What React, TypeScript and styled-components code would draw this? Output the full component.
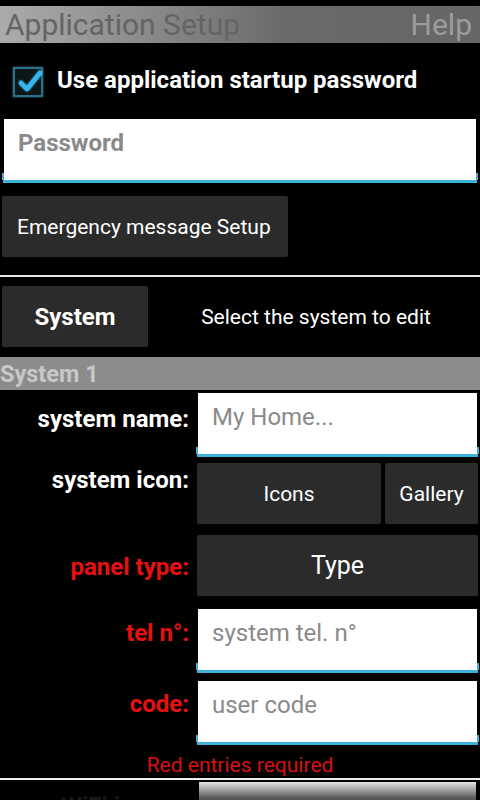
import React from 'react';
import styled, { createGlobalStyle } from 'styled-components';

const GlobalStyle = createGlobalStyle`
  html, body {
    margin: 0;
    padding: 0;
    background: #000;
  }
  body {
    font-family: Roboto, 'Noto Sans', sans-serif;
    overflow: hidden;
  }
`;

// #region -- Styled components
const Screen = styled.div`
  width: 480px;
  height: 800px;
  overflow: hidden;
  background: #000;
`;

const TitleBar = styled.header`
  margin-top: 6px;
  height: 37px;
  display: flex;
  align-items: center;
  justify-content: space-between;
  padding: 0 8px 0 5px;
  background: linear-gradient(to right, #ababab, #6a6a6a 60%, #666);
`;

const Title = styled.span`
  font-size: 30px;
  color: #646464;
  line-height: 1;
`;

const HelpLink = styled.span`
  font-size: 30px;
  color: #9c9c9c;
  line-height: 1;
`;

const CheckRow = styled.label`
  height: 76px;
  display: flex;
  align-items: center;
  gap: 10px;
  padding-left: 11px;
`;

const CheckText = styled.span`
  font-size: 24px;
  font-weight: bold;
  color: #fff;
  margin-top: -2px;
`;

const Field = styled.div<{ $left?: number; $right?: number }>`
  position: relative;
  height: 64px;
  margin: 0 ${(p) => p.$right ?? 3}px 0 ${(p) => p.$left ?? 3}px;
  box-sizing: border-box;
  border-bottom: 3px solid #3eb1d8;
  &::before,
  &::after {
    content: '';
    position: absolute;
    bottom: 0;
    width: 2px;
    height: 7px;
    background: #3eb1d8;
  }
  &::before { left: -1px; }
  &::after { right: -1px; }
`;

const FieldInner = styled.div<{ $bold?: boolean }>`
  height: 100%;
  margin: 0 1px;
  background: #fff;
  box-sizing: border-box;
  padding: 10px 14px 0;
  font-size: 24px;
  font-weight: ${(p) => (p.$bold ? 'bold' : 'normal')};
  color: #8a8a8a;
`;

const Button = styled.div<{ $bold?: boolean; $size?: number }>`
  height: 61px;
  display: flex;
  align-items: center;
  justify-content: center;
  background: #2b2b2b;
  border-radius: 2px;
  color: #fff;
  font-size: ${(p) => p.$size ?? 21}px;
  font-weight: ${(p) => (p.$bold ? 'bold' : 'normal')};
  box-sizing: border-box;
`;

const EmergencyButton = styled(Button)`
  width: 286px;
  margin: 13px 0 0 2px;
  justify-content: flex-start;
  padding-left: 15px;
`;

const Divider = styled.hr`
  margin: 18px 0 0;
  border: none;
  height: 2px;
  background: #e8e8e8;
`;

const SystemRow = styled.div`
  margin-top: 9px;
  display: flex;
  align-items: center;
`;

const SystemButton = styled(Button)`
  width: 146px;
  margin-left: 2px;
`;

const Hint = styled.span`
  flex: 1;
  text-align: center;
  font-size: 21px;
  color: #fff;
  padding-left: 4px;
`;

const SectionHeader = styled.div`
  margin-top: 10px;
  height: 33px;
  display: flex;
  align-items: center;
  background: #8c8c8c;
  color: #c8c8c8;
  font-size: 23.5px;
  font-weight: bold;
`;

const Form = styled.div`
  display: grid;
  grid-template-columns: 197px 1fr;
  padding-top: 3px;
`;

const Label = styled.div<{ $required?: boolean; $top: number }>`
  text-align: right;
  padding: ${(p) => p.$top}px 8px 0 0;
  font-size: 24px;
  font-weight: bold;
  color: ${(p) => (p.$required ? '#e8100f' : '#fff')};
`;

const Cell = styled.div<{ $top: number }>`
  margin-top: ${(p) => p.$top}px;
`;

const ButtonPair = styled.div`
  display: flex;
  gap: 4px;
  margin-right: 2px;
`;

const IconsButton = styled(Button)`
  flex: 184;
`;

const GalleryButton = styled(Button)`
  flex: 93;
`;

const TypeButton = styled(Button)`
  margin-right: 2px;
`;

const Required = styled.div`
  margin-top: 8px;
  text-align: center;
  font-size: 21px;
  color: #d8100f;
`;

const BottomDivider = styled.hr`
  margin: 1px 0 0;
  border: none;
  height: 2px;
  background: #f0f0f0;
`;

const NextRow = styled.div`
  display: grid;
  grid-template-columns: 199px 1fr;
  margin-top: 2px;
`;

const NextLabel = styled.div`
  text-align: right;
  padding: 10px 14px 0 0;
  font-size: 24px;
  font-weight: bold;
  color: #1a1a1a;
`;

const SliderBar = styled.div`
  height: 40px;
  margin-right: 4px;
  background: linear-gradient(to bottom, #e4e4e4, #5a5a5a 40%, #222);
`;
// #endregion

function CheckIcon() {
  return (
    <svg width="36" height="36" viewBox="0 0 36 36">
      <defs>
        <filter id="glow" x="-30%" y="-30%" width="160%" height="160%">
          <feGaussianBlur stdDeviation="1.2" result="b" />
          <feMerge>
            <feMergeNode in="b" />
            <feMergeNode in="SourceGraphic" />
          </feMerge>
        </filter>
      </defs>
      <rect x="3" y="5" width="28" height="28" fill="#0b1418" stroke="#2d6f8c" strokeWidth="2" filter="url(#glow)" />
      <path
        d="M10 20 L16 26 L29 10"
        fill="none"
        stroke="#36b7ee"
        strokeWidth="4.5"
        strokeLinecap="round"
        strokeLinejoin="round"
        filter="url(#glow)"
      />
    </svg>
  );
}

function App() {
  return (
    <Screen>
      <GlobalStyle />
      <TitleBar>
        <Title>Application Setup</Title>
        <HelpLink>Help</HelpLink>
      </TitleBar>

      <CheckRow>
        <CheckIcon />
        <CheckText>Use application startup password</CheckText>
      </CheckRow>

      <Field>
        <FieldInner $bold>Password</FieldInner>
      </Field>

      <EmergencyButton>Emergency message Setup</EmergencyButton>

      <Divider />

      <SystemRow>
        <SystemButton $bold $size={24}>System</SystemButton>
        <Hint>Select the system to edit</Hint>
      </SystemRow>

      <SectionHeader>System 1</SectionHeader>

      <Form>
        <Label $top={12}>system name:</Label>
        <Cell $top={0}>
          <Field $left={0} $right={2}>
            <FieldInner>My Home...</FieldInner>
          </Field>
        </Cell>

        <Label $top={9}>system icon:</Label>
        <Cell $top={6}>
          <ButtonPair>
            <IconsButton>Icons</IconsButton>
            <GalleryButton>Gallery</GalleryButton>
          </ButtonPair>
        </Cell>

        <Label $required $top={29}>panel type:</Label>
        <Cell $top={11}>
          <TypeButton $size={25}>Type</TypeButton>
        </Cell>

        <Label $required $top={23}>tel n°:</Label>
        <Cell $top={13}>
          <Field $left={0} $right={2}>
            <FieldInner>system tel. n°</FieldInner>
          </Field>
        </Cell>

        <Label $required $top={17}>code:</Label>
        <Cell $top={8}>
          <Field $left={0} $right={2}>
            <FieldInner>user code</FieldInner>
          </Field>
        </Cell>
      </Form>

      <Required>Red entries required</Required>
      <BottomDivider />

      <NextRow>
        <NextLabel>WiFi in use:</NextLabel>
        <SliderBar />
      </NextRow>
    </Screen>
  );
}

export default App;
